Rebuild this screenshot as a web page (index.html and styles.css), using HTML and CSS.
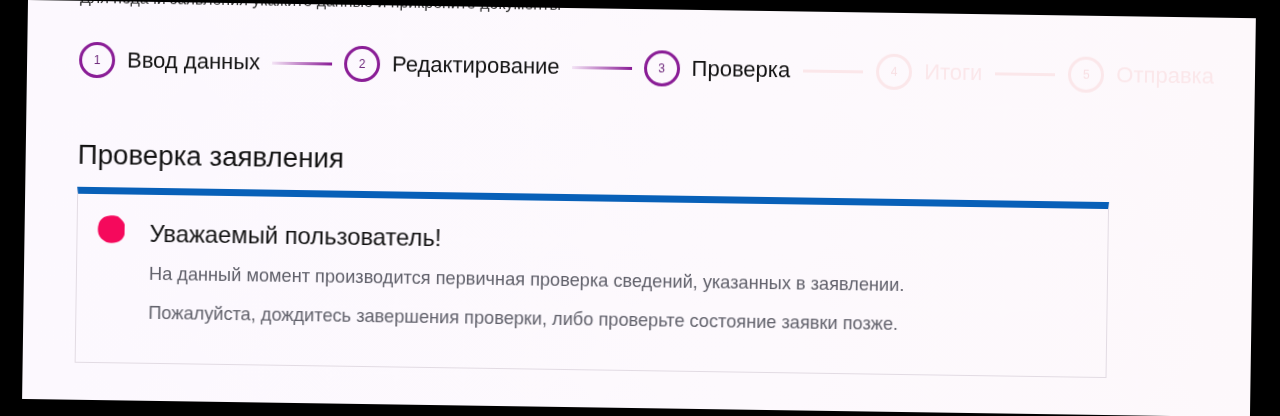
FILE: index.html
```html
<!DOCTYPE html>
<html lang="ru">

<head>
    <meta charset="UTF-8">
    <title>Проверка заявления</title>
    <link rel="stylesheet" href="styles.css">
</head>

<body>
    <div class="sheet">
        <p class="cut-line">Для подачи заявления укажите данные и прикрепите документы</p>

        <div class="steps">
            <div class="step">
                <span class="step-num">1</span>
                <span class="step-label">Ввод данных</span>
            </div>
            <span class="step-line"></span>
            <div class="step">
                <span class="step-num">2</span>
                <span class="step-label">Редактирование</span>
            </div>
            <span class="step-line"></span>
            <div class="step">
                <span class="step-num">3</span>
                <span class="step-label">Проверка</span>
            </div>
            <span class="step-line step-line-off"></span>
            <div class="step step-off">
                <span class="step-num">4</span>
                <span class="step-label">Итоги</span>
            </div>
            <span class="step-line step-line-off"></span>
            <div class="step step-off">
                <span class="step-num">5</span>
                <span class="step-label">Отправка</span>
            </div>
        </div>

        <h1>Проверка заявления</h1>

        <div class="notice">
            <svg class="notice-dot" viewBox="0 0 30 30" width="30" height="30">
                <path d="M10 2 C13 1 18 1 21 2 C24 4 27 7 28 10 L28 20 C27 24 24 27 20 28 C17 29 13 29 10 28 C6 26 3 23 2 20 C1 17 1 13 2 10 C3 6 6 3 10 2 Z" fill="#f5095c" />
            </svg>
            <div class="notice-text">
                <h2>Уважаемый пользователь!</h2>
                <p>На данный момент производится первичная проверка сведений, указанных в заявлении.</p>
                <p>Пожалуйста, дождитесь завершения проверки, либо проверьте состояние заявки позже.</p>
            </div>
        </div>
    </div>
</body>

</html>
```

FILE: styles.css
```css
html,
body {
    height: 100%;
}

body {
    margin: 0;
    background-color: #000;
    overflow: hidden;
    font-family: 'Liberation Sans', Arial, sans-serif;
}

.sheet {
    width: 1228px;
    height: 399px;
    margin-left: 28px;
    box-sizing: border-box;
    padding: 0 0 0 52px;
    overflow: hidden;
    background: linear-gradient(90deg, #fcf8fe 0%, #fdf9fd 60%, #fdf8fb 100%);
    transform: rotate(0.85deg);
    transform-origin: 0 0;
    filter: blur(0.45px);
}

.cut-line {
    height: 15px;
    margin: -12px 0 0 0;
    font-size: 16px;
    line-height: 18px;
    color: #333;
}

.steps {
    display: flex;
    align-items: center;
    margin-top: 38px;
    height: 36px;
}

.step {
    display: flex;
    align-items: center;
    gap: 12px;
}

.step-num {
    display: flex;
    align-items: center;
    justify-content: center;
    width: 36px;
    height: 36px;
    box-sizing: border-box;
    border: 3px solid #8a1d96;
    border-radius: 50%;
    font-size: 12px;
    color: #6f2a7c;
}

.step-label {
    font-size: 22px;
    color: #111;
}

.step-line {
    width: 60px;
    height: 3px;
    margin: 0 12px;
    background: linear-gradient(90deg, #f3e3f5, #8a1d96);
}

.step-line-off {
    margin: 0 13px;
    background: #fbe7ea;
}

.step-off .step-num {
    border-color: #fbe7ea;
    color: #f8dfe3;
}

.step-off .step-label {
    color: #fbe7ea;
}

h1 {
    margin: 60px 0 0 0;
    font-size: 27.7px;
    line-height: 34px;
    font-weight: normal;
    color: #111;
}

.notice {
    display: flex;
    gap: 23px;
    width: 1032px;
    height: 176px;
    margin-top: 15px;
    padding: 20px 0 0 19px;
    box-sizing: border-box;
    border: 1px solid #e2dbe3;
    border-top: 7px solid #0860b8;
}

.notice-dot {
    flex-shrink: 0;
}

.notice-text h2 {
    margin: 5px 0 0 0;
    font-size: 23.8px;
    line-height: 28px;
    font-weight: normal;
    color: #111;
}

.notice-text p {
    margin: 13px 0 0 0;
    font-size: 18.2px;
    line-height: 26px;
    color: #60606a;
}
```
